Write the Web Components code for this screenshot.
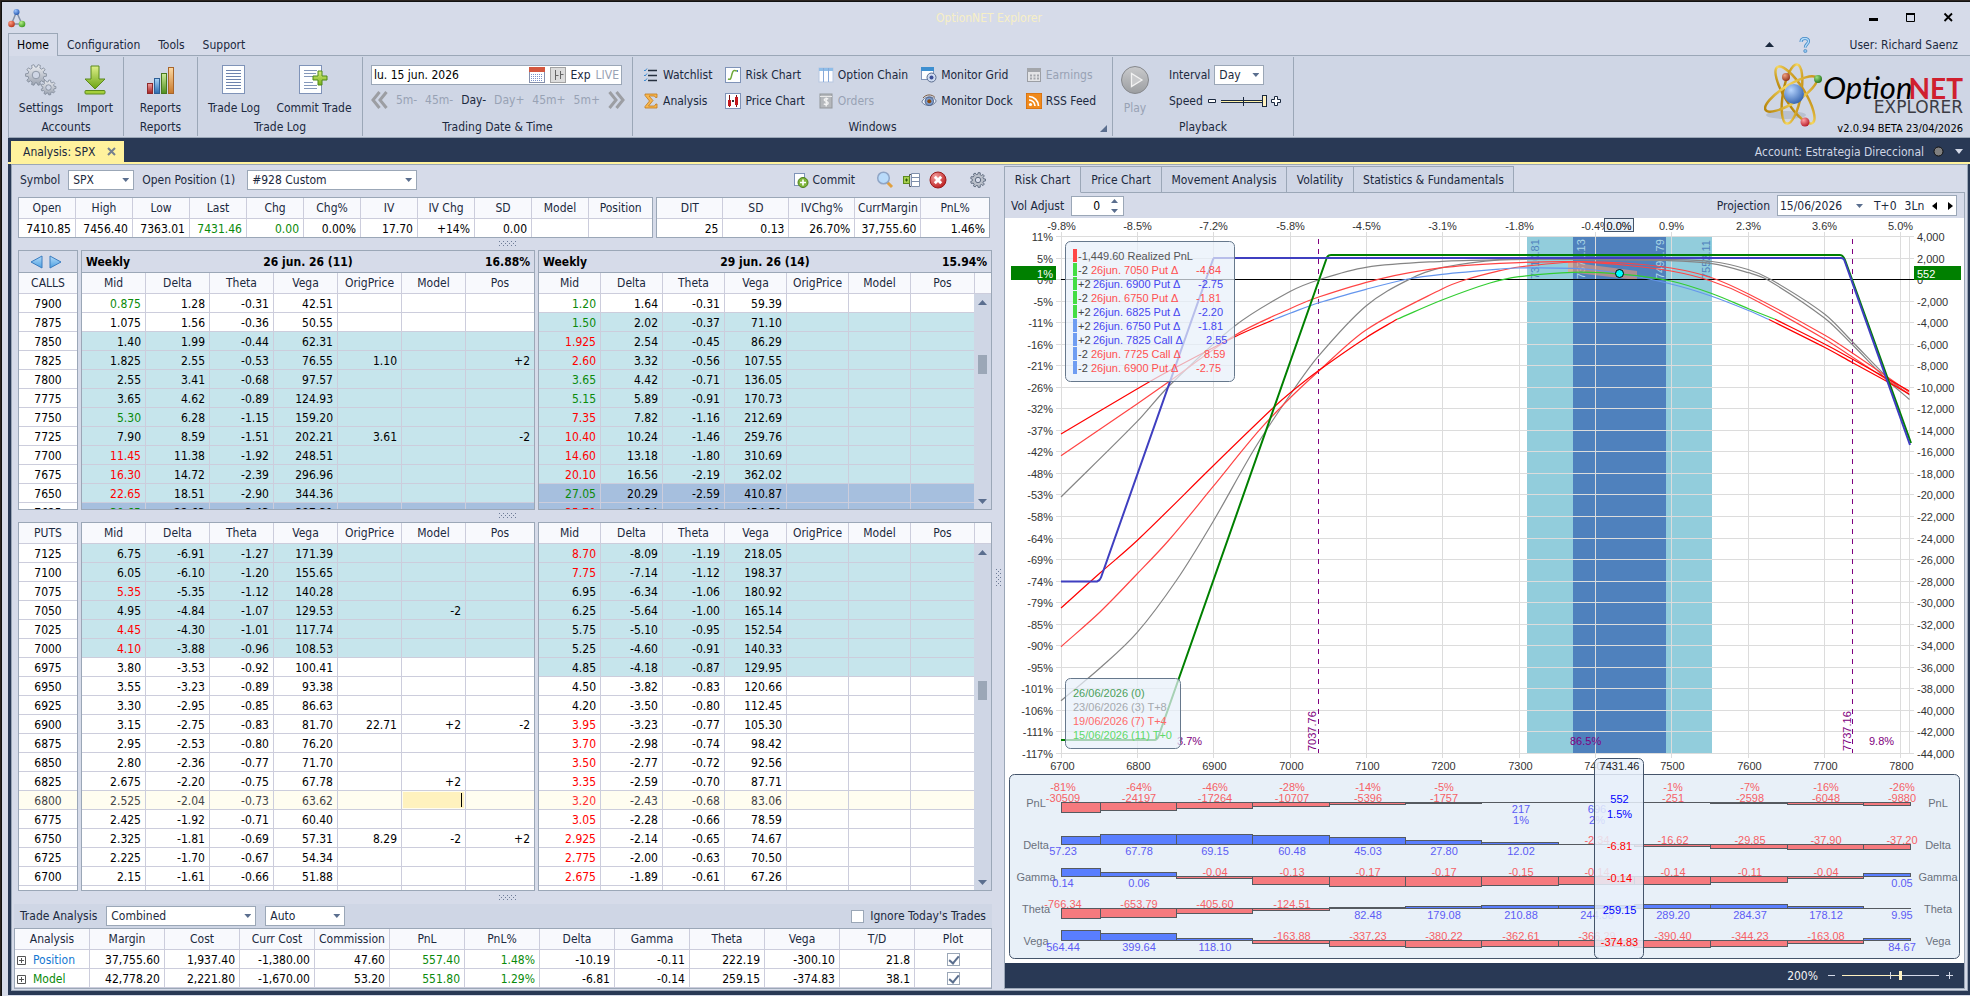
<!DOCTYPE html>
<html lang="en">
<head>
<meta charset="utf-8">
<title>OptionNET Explorer</title>
<style>
html,body{margin:0;height:100%}
body{background:#2b2420;font:12px/18px "DejaVu Sans Condensed","DejaVu Sans",sans-serif;color:#1b293e;overflow:hidden}
</style>
</head>
<body>
<app-window></app-window>
<script>
const BASE = `
*{box-sizing:border-box}
button,input,select{font:inherit;color:inherit;margin:0;padding:0;border:0;background:none;border-radius:0;outline:0}
a{color:inherit;text-decoration:none}
svg{display:block;flex:none}
table{border-collapse:separate;border-spacing:0;table-layout:fixed;width:100%}
th{font-weight:400}
th,td{padding:0;white-space:nowrap;overflow:hidden}
`;
function define(name, css, html, init) {
  customElements.define(name, class extends HTMLElement {
    connectedCallback() {
      if (this.shadowRoot) return;
      const root = this.attachShadow({mode: 'open'});
      const t = document.createElement('template');
      t.innerHTML = `<style>${BASE}${css}</style>` + (typeof html === 'function' ? html(this) : html);
      root.append(t.content.cloneNode(true));
      if (init) init(root, this);
    }
  });
}

/* ---------- icons ---------- */
const gearPath = (cx, cy, r, n) => {
  let d = '';
  for (let i = 0; i < n; i++) {
    const a = i * 2 * Math.PI / n, w = Math.PI / n;
    [[-.62, .76], [-.38, 1], [.38, 1], [.62, .76]].forEach(([k, m], j) => {
      const x = cx + Math.cos(a + k * w) * r * m, y = cy + Math.sin(a + k * w) * r * m;
      d += (i || j ? 'L' : 'M') + x.toFixed(2) + ' ' + y.toFixed(2);
    });
  }
  const h = r * .36;
  return d + `Z M${cx - h} ${cy}a${h} ${h} 0 1 0 ${2 * h} 0a${h} ${h} 0 1 0 ${-2 * h} 0Z`;
};
const grad = (id, a, b) => `<linearGradient id="${id}" x1="0" y1="0" x2="0" y2="1"><stop offset="0" stop-color="${a}"/><stop offset="1" stop-color="${b}"/></linearGradient>`;
const ball = (id, a, b) => `<radialGradient id="${id}" cx=".35" cy=".3" r=".8"><stop offset="0" stop-color="${a}"/><stop offset="1" stop-color="${b}"/></radialGradient>`;
const page = (x, y, w, h) => `<rect x="${x}" y="${y}" width="${w}" height="${h}" fill="#fdfeff" stroke="#7f93b8"/>`;
const ICONS = {
  app: [18, 20, `<defs>${ball('a','#9cc4ff','#1d4fa8')}${ball('b','#ff9a80','#b02a10')}${ball('c','#b6f08a','#2f8f12')}</defs><path d="M8 5 3.500 16M9 5l5 11M4 16h9" stroke="#8390a6" stroke-width="1.500" fill="none"/><circle cx="8.500" cy="4" r="3" fill="url(#a)"/><circle cx="3.500" cy="16" r="3.300" fill="url(#b)"/><circle cx="14" cy="16" r="3.300" fill="url(#c)"/>`],
  settings: [32, 32, `<defs>${grad('a','#eceef2','#9aa2b0')}</defs><path fill-rule="evenodd" d="${gearPath(11, 11, 10.5, 10)}" fill="url(#a)" stroke="#7f8998" stroke-width=".8"/><path fill-rule="evenodd" d="${gearPath(23.5, 23.5, 7.500, 9)}" fill="url(#a)" stroke="#7f8998" stroke-width=".8"/>`],
  import: [24, 32, `<defs>${grad('a','#dff08a','#6aa312')}</defs><path d="M8 2h8v13h6L12 25 2 15h6z" fill="url(#a)" stroke="#5b8a1c"/><rect x="2" y="26.500" width="20" height="3.500" rx="1" fill="#a5cf3c" stroke="#5b8a1c"/>`],
  reports: [30, 32, `<defs>${grad('a','#f0a0a0','#a32020')}${grad('b','#a8d4f8','#2b6cb0')}${grad('c','#cdea9a','#4f8f20')}${grad('d','#fbd9a4','#c8782a')}</defs><rect x="1.500" y="19.500" width="5" height="10" fill="url(#a)" stroke="#8e2a2a"/><rect x="8.500" y="14.500" width="5" height="15" fill="url(#b)" stroke="#2e5f96"/><rect x="15.500" y="9.500" width="5" height="20" fill="url(#c)" stroke="#48781f"/><rect x="22.500" y="3.500" width="5" height="26" fill="url(#d)" stroke="#a8652a"/>`],
  log: [26, 32, page(1.5, 1.5, 22, 28) + `<path d="M5 6.500h15M5 9.500h15M5 12.500h15M5 15.500h15M5 18.500h15M5 21.500h15M5 24.500h15" stroke="#6d83ad"/>`],
  committrade: [32, 32, page(1.5, 1.5, 22, 28) + `<defs>${grad('a','#d9f07a','#77ae1c')}</defs><path d="M6 6.500h13M6 9.500h12M6 12.500h9M6 18.500h9M6 21.500h13M6 24.500h13" stroke="#8397ba"/><path d="M20 7h4v5h5v4h-5v5h-4v-5h-5v-4h5z" fill="url(#a)" stroke="#4f8a17"/>`],
  calendar: [16, 16, `<rect x=".5" y=".5" width="15" height="15" fill="#fff" stroke="#8590ad"/><rect x="0" y="0" width="16" height="5" fill="#d4573f"/><path d="M2 7.500h12M2 9.500h12M2 11.500h12M2 13.500h12" stroke="#7c92c8" stroke-dasharray="1 1"/>`],
  hl: [16, 16, `<rect x=".5" y=".5" width="15" height="15" fill="#dcdcdc" stroke="#a2a2a2"/><path d="M5.500 3v10M5.500 8.500h3M10.500 4v8M10.500 7.500h3" stroke="#666" fill="none"/>`],
  prev: [17, 18, `<path d="M8.500 1 2 9l6.500 8M15.500 1 9 9l6.500 8" stroke="#9c9ea3" stroke-width="3" fill="none"/>`],
  next: [17, 18, `<path d="M1.500 1 8 9l-6.500 8M8.500 1 15 9l-6.500 8" stroke="#9c9ea3" stroke-width="3" fill="none"/>`],
  watchlist: [16, 16, `<path d="M5 3.500h9M5 8.500h9M5 13.500h9" stroke="#26303f" stroke-width="1.500"/><path d="M1 3l1 1 2-2.500M1 8l1 1 2-2.500M1 13l1 1 2-2.500" stroke="#3d8ad0" fill="none"/>`],
  sigma: [16, 16, `<path d="M2 1h12v3.500h-1.500L11.500 3H6l4 4.500L5.500 13h6l1.300-2H14v4H2v-1.500L6.500 8 2 2.500z" fill="#f7b64e" stroke="#c07a1c" stroke-width=".8"/>`],
  risk: [16, 16, page(.5, .5, 15, 15) + `<path d="M3 12c3 1 3-1 4-5s2-4 5-3" stroke="#6fa83a" stroke-width="1.500" fill="none"/><path d="M12 4h1" stroke="#4a78c0" stroke-width="2"/>`],
  price: [16, 16, page(.5, .5, 15, 15) + `<path d="M4.500 2v12M11.500 2v12M8 7v1" stroke="#7a1010"/><rect x="3" y="7" width="3" height="6" fill="#c4161c"/><rect x="10" y="4" width="3" height="8" fill="#c4161c"/><rect x="7" y="7" width="2" height="2" fill="#333"/>`],
  chain: [16, 16, `<rect x="1" y="1" width="14" height="14" fill="#fdfdff" stroke="#b7c7e2"/><path d="M1 1h14v3H1z" fill="#8fbde8"/><path d="M5.500 1v14M10.500 1v14" stroke="#86a8d8"/>`],
  orders: [16, 16, `<rect x="2" y="1" width="12" height="14" fill="#b5b8bc" stroke="#94979c"/><path d="M2 3.500h12" stroke="#e8e8e8"/><path d="M10.200 6.300C9 5 6 5.300 6.200 7s4 1.200 4 3-3 2-4.400.700M8.200 4.500v9" stroke="#f4f4f4" stroke-width="1.300" fill="none"/>`],
  mgrid: [16, 16, page(.5, .5, 12, 12) + `<path d="M0 0h13v4H0z" fill="#3d8fd0"/><circle cx="10.500" cy="10.500" r="4.500" fill="#cfdcf2" stroke="#5a6b8c"/><circle cx="10.500" cy="10.500" r="2" fill="#3c4f96"/>`],
  mdock: [16, 16, `<path d="M.8 9C3 2.500 13 2.500 15.200 8 13 13.500 4 14 .8 9z" fill="#eef3fb" stroke="#6d7c97"/><circle cx="8.300" cy="8.300" r="4.200" fill="#7b9ccc" stroke="#4e6188"/><circle cx="8.300" cy="8.300" r="2" fill="#8a4a12"/><path d="M2 5C5 1 11 1 14 4.500" stroke="#7a5a40" fill="none"/>`],
  earnings: [16, 16, `<rect x="1.500" y="1.500" width="13" height="13" fill="#e3e4e6" stroke="#9b9ea4"/><path d="M1 1h14v4H1z" fill="#a3a6ab"/><path d="M4 8.500h9M4 11.500h9" stroke="#a3a6ab" stroke-width="2" stroke-dasharray="2 1.500"/>`],
  rss: [16, 16, `<rect x="0" y="0" width="16" height="16" fill="#f08a1c" stroke="#c8640a"/><circle cx="4.500" cy="11.500" r="1.600" fill="#fff"/><path d="M3 7a6 6 0 0 1 6 6M3 3.500A9.500 9.500 0 0 1 12.500 13" stroke="#fff" stroke-width="1.700" fill="none"/>`],
  play: [30, 32, `<defs>${grad('a','#c9cacc','#9c9ea1')}</defs><circle cx="15" cy="16" r="13.500" fill="url(#a)" stroke="#86888c"/><path d="M11.500 9.500v13L22 16z" fill="#c9cacc" stroke="#f2f2f2" stroke-width="1.300"/>`],
  help: [14, 16, `<path d="M3 5c0-4.500 8-4.500 7.500-.5C10.300 7 7.500 7 7.300 10.500" stroke="#3f86c4" stroke-width="3" fill="none"/><path d="M3 5c0-4.500 8-4.500 7.500-.5C10.300 7 7.500 7 7.300 10.500" stroke="#b4dcfa" stroke-width="1.500" fill="none"/><circle cx="7.300" cy="14" r="1.600" fill="#8cc4f0" stroke="#3a7ab4" stroke-width=".6"/>`],
  commit: [16, 16, page(1.5, 1.5, 10, 12) + `<circle cx="10" cy="10.500" r="5" fill="#7fb53a" stroke="#4c7e1c"/><path d="M10 7.500v6M7 10.500h6" stroke="#fff" stroke-width="1.600"/>`],
  zoom: [18, 18, `<path d="m11 11 5 5" stroke="#e0a040" stroke-width="3"/><circle cx="7.500" cy="7" r="5.800" fill="#b9dbfa" stroke="#8fa5c6" stroke-width="1.500"/>`],
  insert: [17, 16, `<path d="M8.500 1.500h8v13h-8zM8.500 5.500h8M8.500 9.500h8" fill="#fff" stroke="#7f8fab"/><path d="M8 2.500H6.500v12H8" stroke="#555" fill="none"/><rect x=".5" y="4.500" width="6" height="7" fill="#a8cf50" stroke="#5b8a1c"/><path d="M2 8h3M3.500 6.500v3" stroke="#2c5a08"/>`],
  cross: [18, 18, `<defs>${ball('a','#f4a0a0','#b81414')}</defs><circle cx="9" cy="9" r="8" fill="url(#a)" stroke="#9c1c1c"/><path d="m5.800 5.800 6.400 6.400m0-6.400-6.400 6.400" stroke="#fff" stroke-width="2.800"/>`],
  gear: [16, 16, `<path fill-rule="evenodd" d="${gearPath(8, 8, 7.500, 9)}" fill="#b9bfca" stroke="#626e82"/>`],
  left: [13, 14, `<defs>${grad('a','#b4dcfa','#4d9fe0')}</defs><path d="M12 1v12L1 7z" fill="url(#a)" stroke="#3a7cc0"/>`],
  right: [13, 14, `<defs>${grad('a','#b4dcfa','#4d9fe0')}</defs><path d="M1 1v12l11-6z" fill="url(#a)" stroke="#3a7cc0"/>`],
  up: [9, 5, `<path d="M0 5h9L4.500 0z" fill="#5a6e8e"/>`],
  down: [9, 5, `<path d="M0 0h9L4.500 5z" fill="#5a6e8e"/>`],
  expand: [9, 9, `<path d="M.5.500h8v8h-8zM2 4.500h5M4.500 2v5" fill="#fff" stroke="#555"/>`],
  min: [11, 11, `<rect x="2" y="6" width="9" height="3" fill="#000"/>`],
  max: [11, 11, `<path d="M1.500 1v8.500h8V1M1 1.500h9" stroke="#000" fill="none"/><path d="M1 1h9v2H1z"/>`],
  close: [11, 11, `<path d="m1.500 1.500 7.500 7.500m0-7.500L1.500 9" stroke="#000" stroke-width="1.800"/>`],
};
define('app-icon', ':host{display:block;flex:none}', el => {
  const [w, h, body] = ICONS[el.getAttribute('name')];
  return `<svg width="${w}" height="${h}" viewBox="0 0 ${w} ${h}" aria-hidden="true">${body}</svg>`;
});
define('grip-dots', ':host{display:flex;justify-content:center;align-items:center;flex:none}', el => {
  const v = el.hasAttribute('vertical');
  return `<svg width="${v ? 6 : 18}" height="${v ? 18 : 6}"><defs><pattern id="p" width="4" height="4" patternUnits="userSpaceOnUse"><path d="M0 0h1v1H0zM2 2h1v1H2z" fill="#6d7b96"/></pattern></defs><rect width="18" height="18" fill="url(#p)"/></svg>`;
});

/* ---------- drop-down ---------- */
define('drop-down', `
:host{display:block;position:relative}
select{appearance:none;display:block;width:100%;height:20px;background:#fff;border:1px solid #9ba7b7;padding:0 16px 0 4px;color:#1b293e;line-height:18px}
i{position:absolute;right:5px;top:8px;width:7px;height:4px;background:#5a6e8e;clip-path:polygon(0 0,100% 0,50% 100%);pointer-events:none}
`, el => `<select aria-label="${el.getAttribute('label')}"><option>${el.getAttribute('value')}</option></select><i></i>`);

/* ---------- title + ribbon ---------- */
define('title-bar', `
:host{display:grid;grid-template-columns:1fr auto 1fr;align-items:center;height:31px;padding:0 16px 0 6px}
.t{color:#f6efc6;padding-left:16px}
.c{display:flex;justify-content:flex-end;gap:27px}
.c button{width:11px;height:11px}
`, `<app-icon name="app"></app-icon><span class="t">OptionNET Explorer</span>
<div class="c"><button aria-label="Minimize"><app-icon name="min"></app-icon></button><button aria-label="Maximize"><app-icon name="max"></app-icon></button><button aria-label="Close"><app-icon name="close"></app-icon></button></div>`);

define('ribbon-tabs', `
:host{display:flex;height:23px;position:relative;padding-left:6px;align-items:stretch}
:host::after{content:"";position:absolute;left:56px;right:0;bottom:0;height:1px;background:#9ba7b7}
button{padding:0 8px;border:1px solid transparent;border-bottom:0;line-height:22px}
button.on{border-color:#9ba7b7;color:#000;width:50px;padding:0}
.sp{flex:1}
.r{display:flex;align-items:center;padding-right:12px}
.r svg{margin-right:24px}.r app-icon{margin-right:38px}
`, `<button class="on">Home</button><button>Configuration</button><button>Tools</button><button>Support</button><div class="sp"></div>
<div class="r"><svg width="9" height="5"><path d="M0 5h9L4.500 0z" fill="#1b293e"/></svg><app-icon name="help"></app-icon><span>User: Richard Saenz</span></div>`);

define('ribbon-group', `
:host{display:flex;flex-direction:column;flex:none;position:relative;height:79px;margin-top:1px;border-right:1px solid #9ba7b7}
.b{flex:1;display:flex;align-items:stretch}
.l{height:18px;text-align:center}
.x{position:absolute;right:5px;bottom:4px;width:7px;height:7px;background:#5a6e8e;clip-path:polygon(100% 0,100% 100%,0 100%)}
`, el => `<div class="b"><slot></slot></div><div class="l">${el.getAttribute('label')}</div>${el.hasAttribute('launcher') ? '<i class="x"></i>' : ''}`);

define('ribbon-big', `
:host{display:block;flex:none}
button{display:flex;flex-direction:column;align-items:center;width:100%;padding-top:7px}
app-icon{height:35px}
:host([off]) button{color:#98a2b4}
`, el => `<button><app-icon name="${el.getAttribute('icon')}"></app-icon><span>${el.getAttribute('label')}</span></button>`);
define('ribbon-small', `
:host{display:block}
button{display:flex;align-items:center;gap:4px;height:20px;white-space:nowrap}
:host([off]) button{color:#98a2b4}
`, el => `<button><app-icon name="${el.getAttribute('icon')}"></app-icon><span>${el.getAttribute('label')}</span></button>`);

define('date-time', `
:host{display:block;padding:8px 0 0 8px;width:100%}
.d{display:flex;align-items:center;gap:5px;width:251px;height:20px;background:#fff;border:1px solid #9ba7b7;padding:0 2px}
.d input{flex:1;width:0;color:#000}
.off{color:#98a2b4}
.n{display:flex;align-items:center;justify-content:space-between;width:254px;height:30px}
`, `<div class="d"><input aria-label="Trading date" value="lu. 15 jun. 2026"><app-icon name="calendar"></app-icon><app-icon name="hl"></app-icon><button>Exp</button><button class="off">LIVE</button></div>
<div class="n"><button aria-label="Previous"><app-icon name="prev"></app-icon></button><button class="off">5m-</button><button class="off">45m-</button><button>Day-</button><button class="off">Day+</button><button class="off">45m+</button><button class="off">5m+</button><button aria-label="Next"><app-icon name="next"></app-icon></button></div>`);

define('playback-speed', `
:host{display:block;padding:8px 0 0 12px}
.r{display:flex;align-items:center;height:20px;gap:4px}
.r:first-child{gap:1px}
.r+.r{margin-top:6px}
drop-down{width:50px}
input{appearance:none;width:46px;height:14px;background:linear-gradient(#1b293e,#1b293e) 22px 50%/1px 9px no-repeat,linear-gradient(#1b293e 1px,#fff2a8 1px,#fff2a8 2px,#1b293e 2px) 0 50%/100% 3px no-repeat}
input::-webkit-slider-thumb{appearance:none;width:5px;height:12px;background:#fff2c0;border:1px solid #1b293e}
`, `<div class="r"><span>Interval</span><drop-down label="Interval" value="Day"></drop-down></div>
<div class="r"><label for="s">Speed</label><svg width="10" height="10"><path d="M1.500 3.500h7v3h-7z" fill="#fff" stroke="#1b293e"/></svg><input id="s" type="range" min="0" max="10" value="10"><svg width="10" height="10"><path d="M3.500.500h3v3h3v3h-3v3h-3v-3h-3v-3h3z" fill="#fff" stroke="#1b293e"/></svg></div>`);

define('brand-logo', `:host{display:block;margin-left:auto}`, `
<svg width="206" height="80" viewBox="1764 56 206 80" role="img" aria-label="OptionNET Explorer">
<defs>${ball('a','#b8d6ff','#2a5aa8')}${ball('b','#f0a080','#8c2a10')}${ball('c','#9ae080','#1a6a10')}${ball('d','#ffa0a0','#b01020')}<linearGradient id="g"><stop offset="0" stop-color="#b8860b"/><stop offset=".5" stop-color="#f6d860"/><stop offset="1" stop-color="#c8961c"/></linearGradient></defs>
<ellipse cx="1786" cy="115" rx="20" ry="4" fill="#a9b0c0" opacity=".6"/>
<g fill="none" stroke="url(#g)" stroke-width="2.500"><ellipse cx="1795" cy="95" rx="10" ry="33" transform="rotate(-32 1795 95)"/><ellipse cx="1792" cy="94" rx="9" ry="30" transform="rotate(10 1792 94)"/><ellipse cx="1791" cy="94" rx="30" ry="9" transform="rotate(-32 1791 94)"/></g>
<circle cx="1794" cy="94" r="10" fill="url(#a)"/><circle cx="1786" cy="77" r="4" fill="url(#b)"/><circle cx="1818" cy="79" r="4" fill="url(#c)"/><circle cx="1805" cy="122" r="4.500" fill="url(#d)"/>
<text x="1823" y="99" font-family="Lato,sans-serif" font-size="31" font-style="italic" fill="#000">Option</text>
<text x="1963" y="99" text-anchor="end" font-family="Lato,sans-serif" font-size="28" font-weight="700" fill="#d0202e">NET</text>
<text x="1963" y="113" text-anchor="end" font-family="DejaVu Sans,sans-serif" font-size="17" fill="#3c3c44">EXPLORER</text>
<text x="1963" y="132" text-anchor="end" font-family="DejaVu Sans Condensed,DejaVu Sans,sans-serif" font-size="11" fill="#000">v2.0.94 BETA 23/04/2026</text>
</svg>`);

define('ribbon-bar', `
:host{display:flex;height:82px;margin-left:6px;background:#cfd6e5;border-left:1px solid #9ba7b7;border-bottom:1px solid #9ba7b7}
.a{width:115px}.a ribbon-big:first-child{width:64px}.a ribbon-big+ribbon-big{width:44px}
.rp{width:74px}.rp ribbon-big{width:100%}
.tl{width:165px}.tl ribbon-big:first-child{width:72px}.tl ribbon-big+ribbon-big{width:88px}
.dt{width:270px}.w{width:480px}.pb{width:181px}
.cols{display:flex;gap:13px;padding:8px 0 0 10px}
.cols div{display:grid;grid-auto-rows:20px;row-gap:6px;align-content:start}
.pb ribbon-big{width:44px}
`, `
<ribbon-group class="a" label="Accounts"><ribbon-big icon="settings" label="Settings"></ribbon-big><ribbon-big icon="import" label="Import"></ribbon-big></ribbon-group>
<ribbon-group class="rp" label="Reports"><ribbon-big icon="reports" label="Reports"></ribbon-big></ribbon-group>
<ribbon-group class="tl" label="Trade Log"><ribbon-big icon="log" label="Trade Log"></ribbon-big><ribbon-big icon="committrade" label="Commit Trade"></ribbon-big></ribbon-group>
<ribbon-group class="dt" label="Trading Date &amp; Time"><date-time></date-time></ribbon-group>
<ribbon-group class="w" label="Windows" launcher><div class="cols">
<div><ribbon-small icon="watchlist" label="Watchlist"></ribbon-small><ribbon-small icon="sigma" label="Analysis"></ribbon-small></div>
<div><ribbon-small icon="risk" label="Risk Chart"></ribbon-small><ribbon-small icon="price" label="Price Chart"></ribbon-small></div>
<div><ribbon-small icon="chain" label="Option Chain"></ribbon-small><ribbon-small icon="orders" label="Orders" off></ribbon-small></div>
<div><ribbon-small icon="mgrid" label="Monitor Grid"></ribbon-small><ribbon-small icon="mdock" label="Monitor Dock"></ribbon-small></div>
<div><ribbon-small icon="earnings" label="Earnings" off></ribbon-small><ribbon-small icon="rss" label="RSS Feed"></ribbon-small></div></div></ribbon-group>
<ribbon-group class="pb" label="Playback"><ribbon-big icon="play" label="Play" off></ribbon-big><playback-speed></playback-speed></ribbon-group>
<brand-logo></brand-logo>`);

/* ---------- document tabs ---------- */
define('document-tabs', `
:host{display:flex;justify-content:space-between;height:26px;padding:3px 7px 0 3px;border-bottom:2px solid #fff29d;color:#cfd6e5}
.t{display:flex;align-items:center;justify-content:space-between;width:113px;padding:0 8px 0 12px;background:#fff29d;color:#1b293e}
.t button{width:9px;height:9px}
.a{display:flex;align-items:center;gap:9px}
`, `<div class="t"><span>Analysis: SPX</span><button aria-label="Close tab"><svg width="9" height="9"><path d="m1 1 7 7m0-7L1 8" stroke="#75808f" stroke-width="2"/></svg></button></div>
<div class="a"><span>Account: Estrategia Direccional</span><svg width="30" height="11"><circle cx="5.500" cy="5.500" r="4.500" fill="#808080" stroke="#111"/><path d="M22 3h8l-4 5z" fill="#d6dbe9"/></svg></div>`);

define('position-bar', `
:host{display:flex;align-items:center;height:32px;padding:0 18px 2px 8px}
.s{width:66px;margin:0 8px}.p{width:170px;margin-left:12px}
.g{margin-left:auto;display:flex;align-items:center}
button{display:flex;align-items:center}
.g button+button{margin-left:9px}
.g .f{gap:4px;margin-right:12px}.g button.e{margin-left:23px}
`, `<span>Symbol</span><drop-down class="s" label="Symbol" value="SPX"></drop-down><span>Open Position (1)</span><drop-down class="p" label="Open position" value="#928 Custom"></drop-down>
<div class="g"><button class="f"><app-icon name="commit"></app-icon>Commit</button><button aria-label="Zoom"><app-icon name="zoom"></app-icon></button><button aria-label="Insert"><app-icon name="insert"></app-icon></button><button aria-label="Clear"><app-icon name="cross"></app-icon></button><button class="e" aria-label="Options"><app-icon name="gear"></app-icon></button></div>`);

/* ---------- tables ---------- */
const GRID = `
:host{display:block;background:#fff;border:1px solid #9ba7b7;color:#000;min-width:0}
th,td{border-right:1px solid #cccddc;border-bottom:1px solid #cccddc}
tr>:last-child{border-right:0}
th{height:21px;background:#f8f9fd;color:#1b293e;line-height:18px}
td{height:19px;line-height:16px;text-align:right;padding:2px 4px 0 0}
.g{color:#0a8a0a}.r{color:#f00}
`;
const SUMMARY = {
  quote: {w: [57,57,57,57,57,57,57,57,57,57], h: ['Open','High','Low','Last','Chg','Chg%','IV','IV Chg','SD','Model','Position'], r: ['7410.85','7456.40','7363.01','g7431.46','g0.00','0.00%','17.70','+14%','0.00','','']},
  trade: {w: [66,66,66,66], h: ['DIT','SD','IVChg%','CurrMargin','PnL%'], r: ['25','0.13','26.70%','37,755.60','1.46%']},
};
const cols = w => '<colgroup>' + w.map(x => `<col style="width:${x}px">`).join('') + '<col></colgroup>';
const cell = v => /^[gr]/.test(v) ? `<td class="${v[0]}">${v.slice(1)}</td>` : `<td>${v}</td>`;
define('summary-table', GRID + 'td{border-bottom:0;height:18px}', el => {
  const s = SUMMARY[el.getAttribute('kind')];
  return `<table>${cols(s.w)}<thead><tr>${s.h.map(x => `<th>${x}</th>`).join('')}</tr></thead><tbody><tr>${s.r.map(cell).join('')}</tr></tbody></table>`;
});

const CHAIN = {
calls: {
strikes: '7900 7875 7850 7825 7800 7775 7750 7725 7700 7675 7650 7625',
near: `g0.875 1.28 -0.31 42.51|1.075 1.56 -0.36 50.55|1.40 1.99 -0.44 62.31|1.825 2.55 -0.53 76.55 1.10 _ +2|2.55 3.41 -0.68 97.57|3.65 4.62 -0.89 124.93|g5.30 6.28 -1.15 159.20|7.90 8.59 -1.51 202.21 3.61 _ -2|r11.45 11.38 -1.92 248.51|r16.30 14.72 -2.39 296.96|r22.65 18.51 -2.90 344.36|g30.65 22.63 -3.43 387.31`,
far: `g1.20 1.64 -0.31 59.39|g1.50 2.02 -0.37 71.10|r1.925 2.54 -0.45 86.29|r2.60 3.32 -0.56 107.55|g3.65 4.42 -0.71 136.05|g5.15 5.89 -0.91 170.73|r7.35 7.82 -1.16 212.69|r10.40 10.24 -1.46 259.76|r14.60 13.18 -1.80 310.69|r20.10 16.56 -2.19 362.02|g27.05 20.29 -2.59 410.87|r35.70 24.34 -3.00 454.71`,
shade: {near: 'ooaaaaaaaaab', far: 'oaaaaaaaaabb'}},
puts: {
strikes: '7125 7100 7075 7050 7025 7000 6975 6950 6925 6900 6875 6850 6825 6800 6775 6750 6725 6700 _',
near: `6.75 -6.91 -1.27 171.39|6.05 -6.10 -1.20 155.65|r5.35 -5.35 -1.12 140.28|4.95 -4.84 -1.07 129.53 _ -2|r4.45 -4.30 -1.01 117.74|r4.10 -3.88 -0.96 108.53|3.80 -3.53 -0.92 100.41|3.55 -3.23 -0.89 93.38|3.30 -2.95 -0.85 86.63|3.15 -2.75 -0.83 81.70 22.71 +2 -2|2.95 -2.53 -0.80 76.20|2.80 -2.36 -0.77 71.70|2.675 -2.20 -0.75 67.78 _ +2|2.525 -2.04 -0.73 63.62 _ *|2.425 -1.92 -0.71 60.40|2.325 -1.81 -0.69 57.31 8.29 -2 +2|2.225 -1.70 -0.67 54.34|2.15 -1.61 -0.66 51.88|_`,
far: `r8.70 -8.09 -1.19 218.05|r7.75 -7.14 -1.12 198.37|6.95 -6.34 -1.06 180.92|6.25 -5.64 -1.00 165.14|5.75 -5.10 -0.95 152.54|5.25 -4.60 -0.91 140.33|4.85 -4.18 -0.87 129.95|4.50 -3.82 -0.83 120.66|4.20 -3.50 -0.80 112.45|r3.95 -3.23 -0.77 105.30|r3.70 -2.98 -0.74 98.42|r3.50 -2.77 -0.72 92.56|r3.35 -2.59 -0.70 87.71|r3.20 -2.43 -0.68 83.06|r3.05 -2.28 -0.66 78.59|r2.925 -2.14 -0.65 74.67|r2.775 -2.00 -0.63 70.50|r2.675 -1.89 -0.61 67.26|_`,
shade: {near: 'aaaaaaoooooooyooooo', far: 'aaaaaaaooooooyooooo'}}
};
const GHEAD = GRID + `
:host{overflow:hidden}
.e{display:flex;align-items:center;justify-content:space-between;height:22px;padding:0 4px;background:#d6dbe9;border-bottom:1px solid #9ba7b7;font-weight:700}
.a td{background:#c6e5ec}.b td{background:#a6bfde}.y td{background:#fffdf0;color:#444}.y td.r{color:#f33}
`;
define('strike-list', GHEAD + `td{text-align:center;padding:2px 0 0}.e{justify-content:center;gap:6px;padding-right:8px}`, el => {
  const side = el.getAttribute('side'), s = CHAIN[side];
  return (side === 'calls' ? '<div class="e"><button aria-label="Earlier expirations"><app-icon name="left"></app-icon></button><button aria-label="Later expirations"><app-icon name="right"></app-icon></button></div>' : '') +
  `<table><thead><tr><th>${side.toUpperCase()}</th></tr></thead><tbody>${s.strikes.split(' ').map((k, i) => `<tr class="${s.shade.near[i] === 'y' ? 'y' : ''}"><td>${k === '_' ? '' : k}</td></tr>`).join('')}</tbody></table>`;
});
define('scroll-rail', `
:host{display:flex;flex-direction:column;width:17px;flex:none;background:#cfd6e5}
.h{height:21px;background:#f8f9fd;border-left:1px solid #cccddc;border-bottom:1px solid #cccddc;flex:none}
button{display:flex;justify-content:center;align-items:center;height:16px;flex:none}
.t{width:9px;margin:0 4px;background:#9ba7b7;flex:none;height:19px}
`, el => `<div class="h"></div><button aria-label="Scroll up"><app-icon name="up"></app-icon></button><div style="flex:${el.getAttribute('before')}"></div><div class="t"></div><div style="flex:${el.getAttribute('after')}"></div><button aria-label="Scroll down"><app-icon name="down"></app-icon></button>`);
define('option-chain', GHEAD + `
:host{display:flex;flex-direction:column}
.e{flex:none}.e>:last-child{text-align:right}.e>*{flex:1}.e>:nth-child(2){text-align:center}
.w{display:flex;flex:1;min-height:0}.t{flex:1;min-width:0;overflow:hidden}
td.in{padding:1px}
td div{position:relative}
td input{display:block;width:100%;height:16px;background:#fff2be}
td i{position:absolute;right:2px;top:1px;width:1px;height:14px;background:#000}
`, el => {
  const side = el.getAttribute('side'), far = el.hasAttribute('far'), k = far ? 'far' : 'near', s = CHAIN[side];
  const w = far ? 62 : 64;
  const rows = s[k].split('|').map((r, i) => {
    const v = r.split(' '); while (v.length < 7) v.push('_');
    return `<tr class="${s.shade[k][i]}">` + v.map(x => x === '*' ? '<td class="in"><div><input aria-label="Model quantity 6800"><i></i></div></td>' : cell(x === '_' ? '' : x)).join('') + '</tr>';
  }).join('');
  const head = side === 'calls' ? `<div class="e"><span>Weekly</span><span>${far ? '29 jun. 26 (14)' : '26 jun. 26 (11)'}</span><span>${far ? '15.94%' : '16.88%'}</span></div>` : '';
  const rail = far ? (side === 'calls' ? '<scroll-rail before="46" after="120"></scroll-rail>' : '<scroll-rail before="120" after="173"></scroll-rail>') : '';
  return `${head}<div class="w"><div class="t"><table>${cols([w,w,w,w,w,w])}<thead><tr>${['Mid','Delta','Theta','Vega','OrigPrice','Model','Pos'].map(x => `<th>${x}</th>`).join('')}</tr></thead><tbody>${rows}</tbody></table></div>${rail}</div>`;
});

define('trade-analysis', `
:host{display:block;padding:0 12px 0 2px}
.bar{display:flex;align-items:center;height:24px;padding:0 6px;background:#cfd6e5}
.c{width:150px;margin:0 9px}.m{width:80px}
label{margin-left:auto;display:flex;align-items:center;gap:6px}
input{appearance:none;width:13px;height:13px;background:#fff;border:1px solid #9ba7b7}
`, `<div class="bar"><span>Trade Analysis</span><drop-down class="c" label="Trade analysis" value="Combined"></drop-down><drop-down class="m" label="Mode" value="Auto"></drop-down><label><input type="checkbox">Ignore Today's Trades</label></div><analysis-table></analysis-table>`);
define('analysis-table', GRID + `
:host{position:relative}
td.n{text-align:left}
td.n div{display:flex;align-items:center;gap:7px;padding-left:2px}
td.c{padding:0}
td.c input{appearance:none;display:block;position:relative;margin:0 auto;width:13px;height:13px;background:#fff;border:1px solid #9ba7b7}
td.c input:checked::after{content:"";position:absolute;left:3px;top:0;width:4px;height:8px;border:solid #5a6e8e;border-width:0 2px 2px 0;transform:rotate(40deg)}
.pos{color:#1478d2}.mod{color:#0a8a0a}
`, () => {
  const rows = [['Position','pos','37,755.60','1,937.40','-1,380.00','47.60','g557.40','g1.48%','-10.19','-0.11','222.19','-300.10','21.8'],
    ['Model','mod','42,778.20','2,221.80','-1,670.00','53.20','g551.80','g1.29%','-6.81','-0.14','259.15','-374.83','38.1']];
  return `<table>${cols(Array(12).fill(75))}<thead><tr>${['Analysis','Margin','Cost','Curr Cost','Commission','PnL','PnL%','Delta','Gamma','Theta','Vega','T/D','Plot'].map(x => `<th>${x}</th>`).join('')}</tr></thead><tbody>${rows.map(([n, c, ...v]) => `<tr><td class="n"><div><app-icon name="expand"></app-icon><span class="${c}">${n}</span></div></td>${v.map(cell).join('')}<td class="c"><input type="checkbox" checked aria-label="Plot ${n}"></td></tr>`).join('')}</tbody></table>`;
});

define('analysis-pane', `
:host{display:flex;flex-direction:column;min-width:0}
.s{display:flex;gap:3px;padding:0 14px 0 6px;height:41px}
.s>:first-child{flex:636 1 0}.s>:last-child{flex:333 1 0}
.g{display:flex;gap:3px;padding:0 12px 0 6px;min-height:0}
.g strike-list{width:60px;flex:none}.g option-chain{flex:1 1 0}
.calls{flex:260 1 0}.puts{flex:369 1 0}
grip-dots{height:12px}grip-dots.l{height:13px}
trade-analysis{height:86px}
`, `<position-bar></position-bar>
<div class="s"><summary-table kind="quote"></summary-table><summary-table kind="trade"></summary-table></div>
<grip-dots></grip-dots>
<div class="g calls"><strike-list side="calls"></strike-list><option-chain side="calls"></option-chain><option-chain side="calls" far></option-chain></div>
<grip-dots></grip-dots>
<div class="g puts"><strike-list side="puts"></strike-list><option-chain side="puts"></option-chain><option-chain side="puts" far></option-chain></div>
<grip-dots class="l"></grip-dots>
<trade-analysis></trade-analysis>`);

/* ---------- risk chart ---------- */
function smooth(pts) {
  let d = `M${pts[0]} ${pts[1]}`;
  const P = []; for (let i = 0; i < pts.length; i += 2) P.push([pts[i], pts[i + 1]]);
  for (let i = 0; i < P.length - 1; i++) {
    const a = P[i - 1] || P[i], b = P[i], c = P[i + 1], e = P[i + 2] || c, w = c[0] - b[0];
    const s1 = (c[1] - a[1]) / (c[0] - a[0]), s2 = (e[1] - b[1]) / (e[0] - b[0]);
    d += `C${(b[0] + w / 3).toFixed(1)} ${(b[1] + s1 * w / 3).toFixed(1)} ${(c[0] - w / 3).toFixed(1)} ${(c[1] - s2 * w / 3).toFixed(1)} ${c[0]} ${c[1]}`;
  }
  return d;
}
const X = [1061.5,1137.5,1213.5,1290.5,1366.5,1442.5,1519.5,1595.5,1671.5,1748.5,1824.5,1900.5];
const EDGE = [1061.5,1100.5,1176.5,1252.5,1329.5,1405.5,1481.5,1558.5,1634.5,1710.5,1787.5,1863.5,1910.5];
const GREEKS = [
  ['PnL', 802.5, ['-30509','-24197','-17264','-10707','-5396','-1757','217','696','-251','-2598','-6048','-9880'], [-10,-8,-6,-4,-2,-1,0,0,0,-1,-2,-3], ['-81%','-64%','-46%','-28%','-14%','-5%','1%','2%','-1%','-7%','-16%','-26%']],
  ['Delta', 844.5, ['57.23','67.78','69.15','60.48','45.03','27.80','12.02','-2.34','-16.62','-29.85','-37.90','-37.20'], [8,10,10,9,7,4,2,0,-2,-4,-5,-5]],
  ['Gamma', 876.5, ['0.14','0.06','-0.04','-0.13','-0.17','-0.17','-0.15','-0.14','-0.14','-0.11','-0.04','0.05'], [8,4,-2,-8,-10,-10,-9,-8,-8,-6,-2,3]],
  ['Theta', 908.5, ['-766.34','-653.79','-405.60','-124.51','82.48','179.08','210.88','244.38','289.20','284.37','178.12','9.95'], [-10,-9,-5,-2,1,2,3,3,4,4,2,0]],
  ['Vega', 940.5, ['564.44','399.64','118.10','-163.88','-337.23','-380.22','-362.61','-366.29','-390.40','-344.23','-163.08','84.67'], [10,7,2,-3,-6,-7,-6,-6,-7,-6,-3,2]],
];
const LEG = [['#44dd44','-2','26jun. 7050 Put Δ','-4.84',1196],['#44dd44','+2','26jun. 6900 Put Δ','-2.75',1198],['#44dd44','-2','26jun. 6750 Put Δ','-1.81',1196],['#44dd44','+2','26jun. 6825 Put Δ','-2.20',1198],['#6f9df2','+2','26jun. 6750 Put Δ','-1.81',1198],['#6f9df2','+2','26jun. 7825 Call Δ','2.55',1206],['#6f9df2','-2','26jun. 7725 Call Δ','8.59',1204],['#6f9df2','-2','26jun. 6900 Put Δ','-2.75',1196]];
function chart() {
  const t = (x, y, s, a = '', f = '#333') => `<text x="${x}" y="${y}" fill="${f}"${a ? ` text-anchor="${a}"` : ''}>${s}</text>`;
  const v = (x, y, s, f) => `<text transform="translate(${x} ${y}) rotate(-90)" fill="${f}">${s}</text>`;
  const R = '#f66166', B = '#5c5cf5';
  let o = '<rect x="1527" y="237" width="185" height="516" fill="#92cddc"/><rect x="1573" y="237" width="93" height="516" fill="#4f81bd"/>';
  o += v(1539, 279, '7310.81', '#4f81bd') + v(1585, 279, '7371.13', '#a9d6e6') + v(1664, 279, '7491.79', '#a9d6e6') + v(1710, 279, '7552.11', '#4f81bd');
  let g = '';
  X.forEach(x => g += `M${x} 232V758`);
  g += 'M1909.500 236V753';
  const pct = [11,5,0,-5,-11,-16,-21,-26,-32,-37,-42,-48,-53,-58,-64,-69,-74,-79,-85,-90,-95,-101,-106,-111,-117];
  pct.forEach((p, i) => {
    const y = Math.round(236 + i * 21.54) + .5;
    g += `M1056 ${y}H1914`;
    o += t(1053, y + 4, p + '%', 'end') + t(1917, y + 4, (4000 - 2000 * i).toLocaleString('en-US'));
  });
  o += `<path d="${g}" stroke="#dcdcdc" fill="none"/>`;
  ['-9.8','-8.5','-7.2','-5.8','-4.5','-3.1','-1.8','-0.4','0.9','2.3','3.6','5.0'].forEach((p, i) => o += t(X[i], 230, p + '%', 'middle') + t(X[i] + 1, 770, 6700 + 100 * i, 'middle'));
  o += '<path d="M1568 262l69 9v9l-69-8z" fill="#ff9a6e" opacity=".55"/><path d="M1061 279.500h853" stroke="#000"/>';
  o += '<path d="M1318.500 239v514M1852.500 239v514" stroke="#800080" stroke-dasharray="5 5"/>';
  const line = (c, w, p) => `<path d="${smooth(p)}" stroke="${c}" stroke-width="${w}" fill="none"/>`;
  const W = 1.2;
  o += line('#858585', W, [1061,497,1137,421.7,1169,386,1235,325.7,1290,291.5,1319,279.7,1366,267.3,1442,261.3,1500,259.7,1573,259,1666,259.5,1712,261.5,1748,269.5,1771,279.5,1824.5,314,1852.7,342,1886.7,376.7,1909.5,395]);
  o += line('#858585', W, [1061,700.7,1100,668,1137,632.7,1176.7,580,1213,521.7,1255,448,1290,395,1318,356.7,1366,306,1410,279,1442,267.7,1500,259.8,1573,259.5,1666,260.5,1712,263.7,1748.5,272.7,1767,279.5,1824.5,318,1852.7,345,1886,379,1909.5,399.5]);
  o += line('#ff4444', W, [1061,455.7,1137,404,1167,383,1235,335.3,1290,308.7,1318.7,297,1378,279.3,1442,267.7,1500,263.3,1573,261.7,1623,265,1671,271,1711,281,1748.5,296.7,1824.5,339,1852.7,357.3,1909,394]);
  o += line('#ff4444', W, [1061,646.7,1100,612,1137,574,1169,540,1213,486.7,1258,431.7,1290,398,1318,371.7,1366,330,1442,289,1467,279.3,1500,270.7,1519,267,1573,262,1623,263,1671,268,1711,277.5,1748.5,294,1824.5,335,1852.7,353.3,1909,392]);
  o += line('#6495ed', W, [1274,319.5,1290,313.3,1318,303,1366,289.3,1408,279,1442,274.3,1500,269,1519,268,1573,268.3,1595,270,1623,274,1671,284,1711,296,1748.5,310.5,1769,319.5]);
  o += line('#32cd32', W, [1397,319.3,1442,300,1490,283,1519,276.7,1573,272.3,1623,274.3,1671,281,1711,293.3,1748.5,308.7,1775,319.3]);
  o += line('#f00', W, [1061,434,1137,389,1167,372,1235,336.7,1274,319.5]) + line('#f00', W, [1769,319.5,1824.5,347.3,1852.7,362.7,1885.7,380.7,1909,394]);
  o += line('#f00', W, [1061,608,1100,573,1137.7,540,1213,466,1273,408,1290,393,1318,371,1366,337.7,1397,319.3]) + line('#f00', W, [1775,319.3,1824.5,344,1852.7,359.3,1909,390.7]);
  o += '<path d="M1061 740h94q3-1 4-5L1326 260q1-5 5-5h509q3 0 5 5l66 183" stroke="#008000" stroke-width="2" fill="none"/>';
  o += '<path d="M1061 581.500h36q3-1 4-4L1213 259.500l1-1.500h627q3 0 4 4l65 183" stroke="#3f3fc0" stroke-width="2" fill="none"/>';
  o += '<circle cx="1619.500" cy="273.500" r="4" fill="#0ff" stroke="#000"/>';
  o += v(1316, 751, '7037.76', '#800080') + v(1851, 751, '7737.16', '#800080') + t(1177, 745, '3.7%', '', '#800080') + t(1570, 745, '86.5%', '', '#800080') + t(1869, 745, '9.8%', '', '#800080');
  o += '<rect x="1011" y="266" width="45" height="14" fill="#008000"/>' + t(1053, 278, '1%', 'end', '#fff') + '<rect x="1914" y="266" width="47" height="14" fill="#008000"/>' + t(1917, 278, '552', '', '#fff');
  o += '<rect x="1604.500" y="218.500" width="29" height="13" fill="#e8f0f8" stroke="#44546a"/>' + t(1619, 230, '0.0%', 'middle', '#000');
  /* position legend */
  o += '<rect x="1065.500" y="241.500" width="169" height="140" rx="5" fill="#e8f0fa" fill-opacity=".72" stroke="#66788c"/><rect x="1073" y="249" width="4" height="13" fill="#ff4747"/>' + t(1078, 260, '-1,449.60 Realized PnL', '', '#555');
  LEG.forEach(([c, q, n, d, x], i) => {
    const y = 274 + 14 * i, k = q === '-2' ? '#ff5050' : '#4646f0';
    o += `<rect x="1073" y="${y - 11}" width="4" height="13" fill="${c}"/>` + t(1078, y, q, '', '#444') + t(q === '-2' ? 1091 : 1093, y, n, '', k) + t(x, y, d, '', k);
  });
  o += '<rect x="1065.500" y="678.500" width="115" height="70" rx="5" fill="#e8f0fa" fill-opacity=".72" stroke="#66788c"/>' + t(1073, 697, '26/06/2026 (0)', '', '#4c9f5a') + t(1073, 711, '23/06/2026 (3) T+8', '', '#a5a9ae') + t(1073, 725, '19/06/2026 (7) T+4', '', '#ff6a6a') + t(1073, 739, '15/06/2026 (11) T+0', '', '#5fd968');
  /* greeks strip */
  o += '<rect x="1009.500" y="774.500" width="950" height="184" rx="5" fill="#e8f0f8" stroke="#44546a"/>';
  GREEKS.forEach(([n, y, val, h, p]) => {
    o += t(1036, y + 4, n, 'middle', '#6a707c') + t(1938, y + 4, n, 'middle', '#6a707c');
    val.forEach((s, i) => {
      const neg = s[0] === '-', x = X[i] + 1.5;
      if (h[i]) o += `<rect x="${EDGE[i]}" y="${h[i] > 0 ? y - h[i] : y}" width="${EDGE[i + 1] - EDGE[i]}" height="${Math.abs(h[i])}" fill="${h[i] > 0 ? '#597eff' : '#f67a7e'}" stroke="#555a60"/>`;
      o += t(x, neg ? y - 1 : y + 10, s, 'middle', neg ? R : B);
      if (p) o += t(x, neg ? y - 12 : y + 21, p[i], 'middle', neg ? R : B);
    });
    o += `<path d="M1061 ${y}h850" stroke="#555a60"/>`;
  });
  o += '<rect x="1594.500" y="758.500" width="49" height="200" rx="5" fill="#e8f0fa" fill-opacity=".85" stroke="#44546a"/>';
  [[770,'7431.46','#222'],[803,'552','#00f'],[818,'1.5%','#00f'],[850,'-6.81','#f00'],[882,'-0.14','#f00'],[914,'259.15','#00f'],[946,'-374.83','#f00']].forEach(([y, s, c]) => o += t(1619.5, y, s, 'middle', c));
  return o;
}
define('risk-chart', `
:host{display:block;background:#fff;min-height:0}
svg{width:100%;height:100%;font:11px "Liberation Sans",Arial,sans-serif}
`, () => `<svg viewBox="1005 218 959 745" role="img" aria-label="Risk chart">${chart()}</svg>`);

define('chart-tabs', `
:host{display:flex;height:27px;border-top:1px solid #9ba7b7;width:max-content}
button{padding:0;border-right:1px solid #9ba7b7;border-bottom:1px solid #9ba7b7;background:#cfd6e5;line-height:22px}
button.on{border-bottom-color:transparent;background:#d6dbe9}
`, [['Risk Chart',76],['Price Chart',81],['Movement Analysis',125],['Volatility',67],['Statistics & Fundamentals',160]].map(([n, w], i) => `<button class="${i ? '' : 'on'}" style="width:${w}px">${n}</button>`).join(''));
define('chart-toolbar', `
:host{display:flex;align-items:center;height:25px;padding:0 7px 0 6px;gap:7px}
.n{display:flex;align-items:center;width:53px;height:20px;background:#fff;border:1px solid #9ba7b7;padding-right:5px}
.n input{flex:1;width:0;text-align:right;padding-right:11px;color:#000}
.n .v{display:flex;flex-direction:column;gap:6px}
.n button{height:4px;display:flex}
.p{display:flex;align-items:center;width:180px;height:21px;background:#fff;border:1px solid #9ba7b7;padding:0 5px 0 2px}
.p input{width:72px}
.p svg{margin:0 11px 0 4px}.p button{display:flex}.p button+button{margin-left:8px}.p button svg{margin:0}
`, `<label for="v">Vol Adjust</label><span class="n"><input id="v" value="0"><span class="v"><button aria-label="Increase"><svg width="7" height="4"><path d="M0 4h7L3.500 0z" fill="#5a6e8e"/></svg></button><button aria-label="Decrease"><svg width="7" height="4"><path d="M0 0h7L3.500 4z" fill="#5a6e8e"/></svg></button></span></span>
<label for="p" style="margin-left:auto">Projection</label><span class="p"><input id="p" value="15/06/2026"><svg width="7" height="4"><path d="M0 0h7L3.500 4z" fill="#5a6e8e"/></svg><button>T+0</button><button>3Ln</button><button aria-label="Previous"><svg width="5" height="8"><path d="M5 0v8L0 4z" fill="#000"/></svg></button><button aria-label="Next"><svg width="5" height="8" style="margin-left:3px"><path d="M0 0v8l5-4z" fill="#000"/></svg></button></span>`);
define('zoom-footer', `
:host{display:flex;align-items:center;justify-content:flex-end;gap:7px;height:25px;padding-right:11px;background:#293955;color:#f4f4f4}
label{margin-right:3px}
input{appearance:none;width:97px;height:14px;background:linear-gradient(#d6dbe9,#d6dbe9) 48px 50%/1px 7px no-repeat,linear-gradient(90deg,#fff2c0 58px,#d6dbe9 58px) 0 50%/100% 1px no-repeat}
input::-webkit-slider-thumb{appearance:none;width:3px;height:9px;background:#fff2c0}
`, `<label for="z">200%</label><svg width="7" height="7"><path d="M0 3.500h7" stroke="#d6dbe9"/></svg><input id="z" type="range" min="0" max="100" value="61"><svg width="7" height="7"><path d="M0 3.500h7M3.500 0v7" stroke="#d6dbe9"/></svg>`);
define('chart-pane', `
:host{display:flex;flex-direction:column;min-width:0;margin-top:1px;margin-bottom:1px}
.b{flex:1;display:flex;flex-direction:column;min-height:0;border:1px solid #9ba7b7;margin-top:-1px}
chart-tabs{position:relative;border-left:1px solid #9ba7b7}
risk-chart{flex:1}
`, `<chart-tabs></chart-tabs><div class="b"><chart-toolbar></chart-toolbar><risk-chart></risk-chart><zoom-footer></zoom-footer></div>`);

/* ---------- window ---------- */
define('app-window', `
:host{display:flex;flex-direction:column;height:calc(100vh - 1px);padding-bottom:1px;background:#d6dbe9;border-top:1px solid #111;border-left:1px solid #111;position:relative;margin-left:1px;top:1px;box-sizing:border-box}
.doc{flex:1;min-height:0;display:flex;flex-direction:column;margin-left:6px;background:#293955;padding-bottom:4px}
.panel{flex:1;min-height:0;display:flex;margin:0 2px 0 3px;background:#d6dbe9;border:1px solid #9ba7b7;padding-right:2px;position:relative}
analysis-pane{flex:992 1 0}chart-pane{flex:961 1 0}
grip-dots{position:absolute;left:calc(50.800% - 9px);top:404px}
`, `<title-bar></title-bar><ribbon-tabs></ribbon-tabs><ribbon-bar></ribbon-bar>
<div class="doc"><document-tabs></document-tabs><div class="panel"><analysis-pane></analysis-pane><chart-pane></chart-pane><grip-dots vertical></grip-dots></div></div>`);
</script>
</body>
</html>
